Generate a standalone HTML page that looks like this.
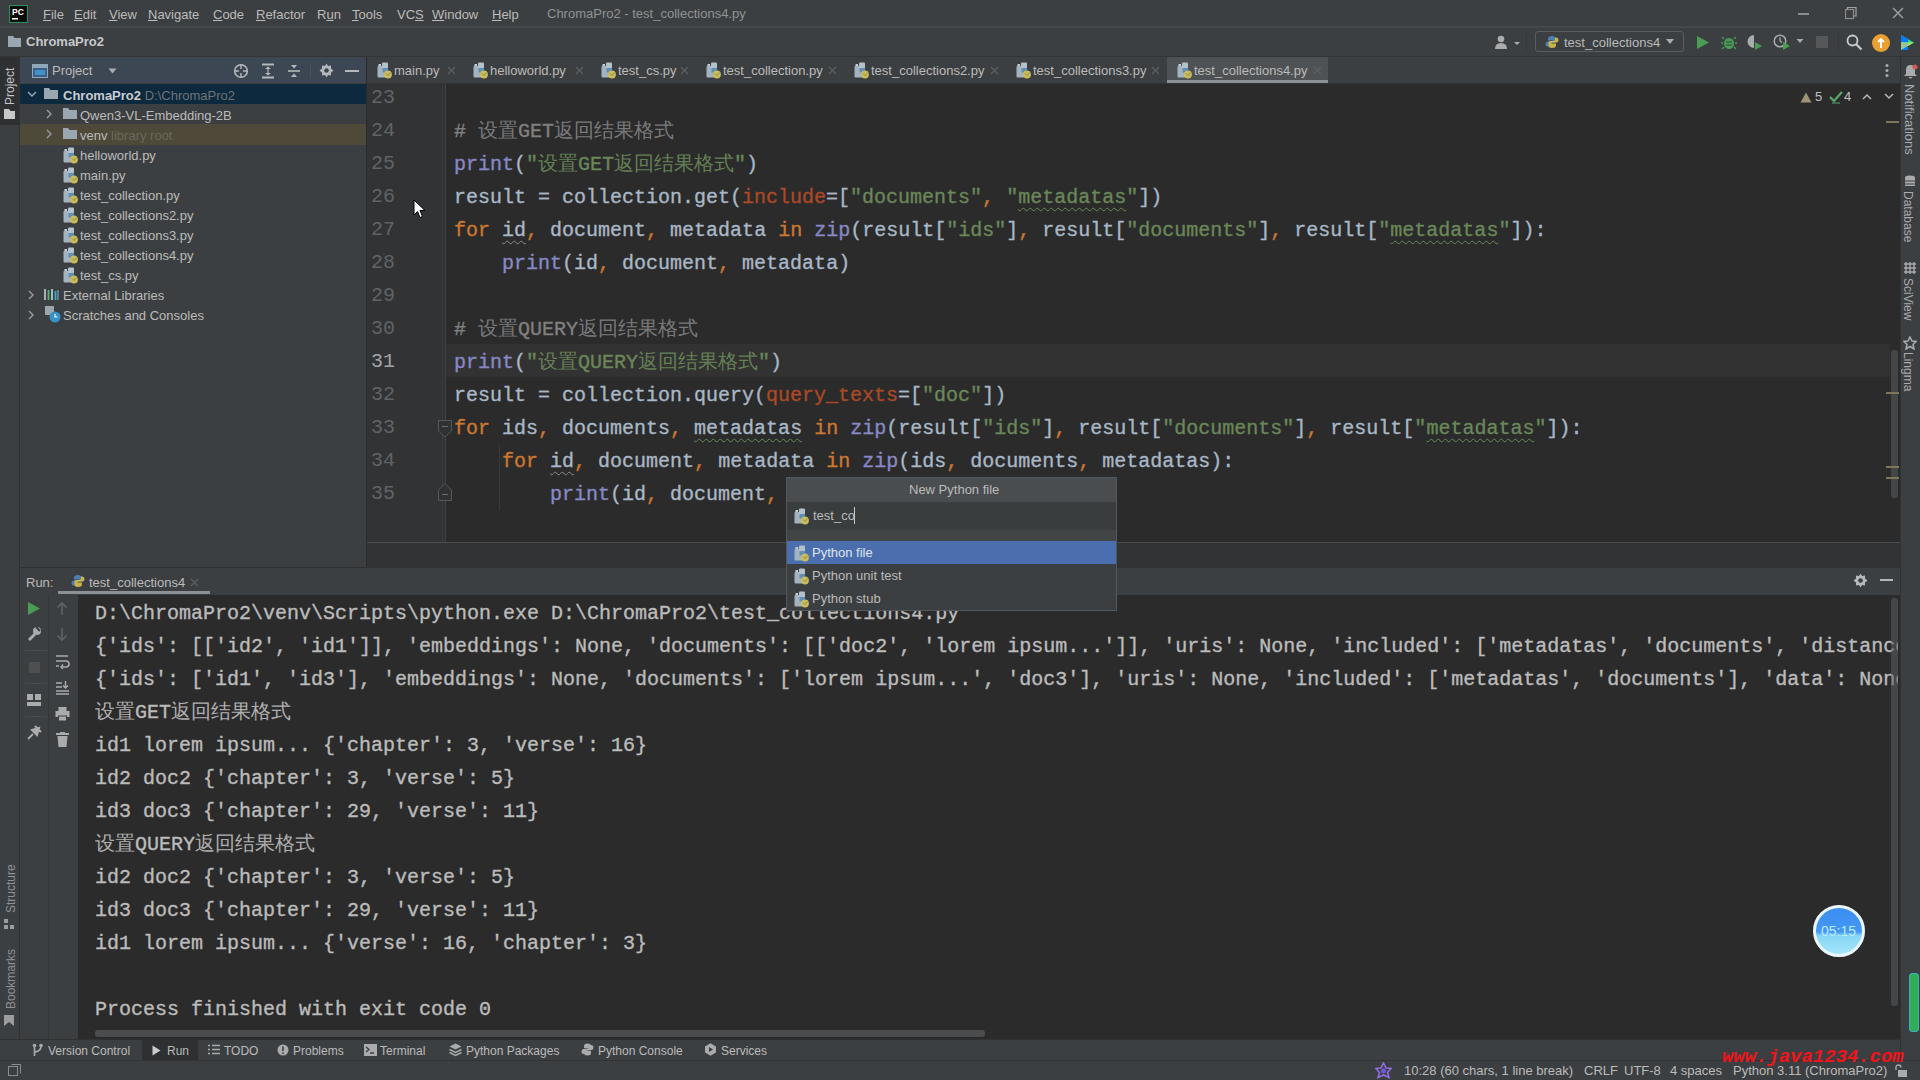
<!DOCTYPE html>
<html><head><meta charset="utf-8">
<style>
*{margin:0;padding:0;box-sizing:border-box}
html,body{width:1920px;height:1080px;overflow:hidden;background:#3c3f41;font-family:"Liberation Sans",sans-serif;color:#bbbbbb}
.a{position:absolute}
.ui{font-size:13px;white-space:nowrap;line-height:16px}
.mono{font-family:"Liberation Mono",monospace;font-size:20px;white-space:pre;line-height:33px;-webkit-text-stroke:0.35px currentColor}
.kw{color:#cc7832}.st{color:#6a8759}.cm{color:#808080}.bi{color:#8888c6}.pm{color:#aa4926}.tx{color:#a9b7c6}
.u{text-decoration:underline;text-underline-offset:1px}
.cj{-webkit-text-stroke:0;opacity:.92;display:inline-block;vertical-align:top;height:33px;overflow:hidden;white-space:nowrap}
.wv{text-decoration:underline wavy #6a8759;text-underline-offset:4px;text-decoration-thickness:1px}
.wvg{text-decoration:underline wavy #8a8a8a;text-underline-offset:4px;text-decoration-thickness:1px}
</style></head>
<body>
<div class="a" style="left:0px;top:0px;width:1920px;height:26px;background:#3c3f41;"></div>
<div class="a" style="left:0px;top:26px;width:1920px;height:2px;background:#45484a;"></div>
<div class="a" style="left:0px;top:28px;width:1920px;height:28px;background:#3c3f41;"></div>
<div class="a" style="left:0px;top:56px;width:1920px;height:1px;background:#323435;"></div>
<div class="a" style="left:0px;top:57px;width:20px;height:1003px;background:#3c3f41;"></div>
<div class="a" style="left:19px;top:57px;width:1px;height:1003px;background:#323232;"></div>
<div class="a" style="left:0px;top:57px;width:19px;height:68px;background:#2e3031;"></div>
<div class="a" style="left:20px;top:57px;width:346px;height:26px;background:#3d4753;"></div>
<div class="a" style="left:20px;top:83px;width:346px;height:484px;background:#3c3f41;"></div>
<div class="a" style="left:20px;top:84px;width:346px;height:20px;background:#0d293e;"></div>
<div class="a" style="left:20px;top:124px;width:346px;height:21px;background:#4e4939;"></div>
<div class="a" style="left:366px;top:57px;width:1px;height:510px;background:#2b2b2b;"></div>
<div class="a" style="left:367px;top:57px;width:1533px;height:26px;background:#3c3f41;"></div>
<div class="a" style="left:367px;top:83px;width:1533px;height:1px;background:#323232;"></div>
<div class="a" style="left:367px;top:84px;width:1533px;height:458px;background:#2b2b2b;"></div>
<div class="a" style="left:367px;top:84px;width:78px;height:458px;background:#313335;"></div>
<div class="a" style="left:445px;top:344px;width:1445px;height:33px;background:#323232;"></div>
<div class="a" style="left:367px;top:542px;width:1533px;height:1px;background:#4a4c4e;"></div>
<div class="a" style="left:367px;top:543px;width:1533px;height:24px;background:#313335;"></div>
<div class="a" style="left:20px;top:567px;width:1880px;height:1px;background:#323232;"></div>
<div class="a" style="left:20px;top:568px;width:1880px;height:27px;background:#3c3f41;"></div>
<div class="a" style="left:78px;top:595px;width:1822px;height:444px;background:#2b2b2b;"></div>
<div class="a" style="left:48px;top:595px;width:1px;height:445px;background:#353739;"></div>
<div class="a" style="left:0px;top:1039px;width:1920px;height:1px;background:#323232;"></div>
<div class="a" style="left:0px;top:1040px;width:1920px;height:20px;background:#3c3f41;"></div>
<div class="a" style="left:0px;top:1060px;width:1920px;height:1px;background:#323232;"></div>
<div class="a" style="left:0px;top:1061px;width:1920px;height:19px;background:#3c3f41;"></div>
<div class="a" style="left:1900px;top:57px;width:20px;height:1003px;background:#3c3f41;"></div>
<div class="a" style="left:1900px;top:57px;width:1px;height:1003px;background:#323232;"></div>
<svg class="a" style="left:9px;top:5px;" width="19" height="18" viewBox="0 0 19 18"><rect x="0.5" y="0.5" width="18" height="17" fill="#0b0b0b" stroke="#2f8a5c" stroke-width="1.2"/><text x="3" y="10" font-family="Liberation Sans" font-weight="bold" font-size="8.5" fill="#fff">PC</text><rect x="3" y="13" width="6" height="1.5" fill="#fff"/></svg>
<div class="a ui" style="left:43px;top:7px;color:#bbbbbb;font-size:13px;"><span class="u">F</span>ile</div>
<div class="a ui" style="left:74px;top:7px;color:#bbbbbb;font-size:13px;"><span class="u">E</span>dit</div>
<div class="a ui" style="left:109px;top:7px;color:#bbbbbb;font-size:13px;"><span class="u">V</span>iew</div>
<div class="a ui" style="left:148px;top:7px;color:#bbbbbb;font-size:13px;"><span class="u">N</span>avigate</div>
<div class="a ui" style="left:213px;top:7px;color:#bbbbbb;font-size:13px;"><span class="u">C</span>ode</div>
<div class="a ui" style="left:256px;top:7px;color:#bbbbbb;font-size:13px;"><span class="u">R</span>efactor</div>
<div class="a ui" style="left:317px;top:7px;color:#bbbbbb;font-size:13px;">R<span class="u">u</span>n</div>
<div class="a ui" style="left:352px;top:7px;color:#bbbbbb;font-size:13px;"><span class="u">T</span>ools</div>
<div class="a ui" style="left:397px;top:7px;color:#bbbbbb;font-size:13px;">VC<span class="u">S</span></div>
<div class="a ui" style="left:432px;top:7px;color:#bbbbbb;font-size:13px;"><span class="u">W</span>indow</div>
<div class="a ui" style="left:492px;top:7px;color:#bbbbbb;font-size:13px;"><span class="u">H</span>elp</div>
<div class="a ui" style="left:547px;top:6px;color:#8f9294;font-size:13px;">ChromaPro2 - test_collections4.py</div>
<div class="a" style="left:1798px;top:13px;width:11px;height:2px;background:#8a8c8e;"></div>
<svg class="a" style="left:1845px;top:7px;" width="12" height="13" viewBox="0 0 12 13"><rect x="0.5" y="2.5" width="8" height="9" fill="none" stroke="#8a8c8e" stroke-width="1.2"/><path d="M2.5 2.5 V0.5 H11 V9 H8.5" fill="none" stroke="#a0a2a4" stroke-width="1.2"/></svg>
<svg class="a" style="left:1892px;top:7px;" width="12" height="12" viewBox="0 0 12 12"><path d="M1 1 L11 11 M11 1 L1 11" stroke="#9a9c9e" stroke-width="1.5"/></svg>
<svg class="a" style="left:8px;top:36px;" width="13" height="11" viewBox="0 0 13 11"><path d="M0 0 H5 L6.5 2 H13 V11 H0 Z" fill="#9aa7b0"/></svg>
<div class="a ui" style="left:26px;top:34px;color:#c8c8c8;font-size:13px;font-weight:bold">ChromaPro2</div>
<svg class="a" style="left:1494px;top:35px;" width="26" height="16" viewBox="0 0 26 16"><circle cx="7" cy="4" r="3.3" fill="#a9abad"/><path d="M1 14 Q1 8 7 8 Q13 8 13 14Z" fill="#a9abad"/><path d="M20 7 h6 l-3 3z" fill="#a9abad"/></svg>
<div class="a" style="left:1526px;top:33px;width:1px;height:18px;background:#353738;"></div>
<div class="a" style="left:1535px;top:31px;width:149px;height:21px;border:1px solid #5b5d5f;border-radius:3px"></div>
<svg class="a" style="left:1545px;top:35px;" width="14" height="14" viewBox="0 0 14 14"><g transform="scale(1.0)"><path d="M7 1 Q3 1 3 3.5 V5.5 H7.5 V6.5 H2.5 Q0.5 6.5 0.5 9 Q0.5 11.5 2.5 11.5 H4 V9.5 Q4 8 5.5 8 H9 Q10.5 8 10.5 6.5 V3.5 Q10.5 1 7 1Z" fill="#4d7fae"/><path d="M7 13 Q11 13 11 10.5 V8.5 H6.5 V7.5 H11.5 Q13.5 7.5 13.5 5 Q13.5 2.5 11.5 2.5 H10 V4.5 Q10 6 8.5 6 H5 Q3.5 6 3.5 7.5 V10.5 Q3.5 13 7 13Z" fill="#d9bf4a" opacity="0.9"/></g></svg>
<div class="a ui" style="left:1564px;top:35px;color:#bbbbbb;font-size:13px;">test_collections4</div>
<svg class="a" style="left:1665px;top:38px;" width="10" height="7" viewBox="0 0 10 7"><path d="M1 1 h8 l-4 5z" fill="#a9abad"/></svg>
<svg class="a" style="left:1696px;top:35px;" width="14" height="15" viewBox="0 0 14 15"><path d="M1 1 L13 7.5 L1 14Z" fill="#499c54"/></svg>
<svg class="a" style="left:1721px;top:34px;" width="16" height="16" viewBox="0 0 16 16"><ellipse cx="8" cy="9.5" rx="5" ry="5.5" fill="#499c54"/><path d="M3 5 L1 3 M13 5 L15 3 M2 9 H0 M14 9 H16 M3 13 L1 15 M13 13 L15 15" stroke="#499c54" stroke-width="1.3"/><path d="M5 8 h6 M5 11 h6" stroke="#3c3f41" stroke-width="1.2"/></svg>
<svg class="a" style="left:1746px;top:34px;" width="18" height="17" viewBox="0 0 18 17"><path d="M8 1 A6.5 6.5 0 1 0 8 14 Z" fill="#a9abad"/><path d="M9 8 L16 12 L9 16Z" fill="#499c54"/></svg>
<svg class="a" style="left:1773px;top:34px;" width="18" height="17" viewBox="0 0 18 17"><circle cx="7" cy="7" r="5.8" fill="none" stroke="#a9abad" stroke-width="1.5"/><path d="M7 3.5 V7 L9 8.5" stroke="#a9abad" stroke-width="1.3" fill="none"/><path d="M10 8 L17 12 L10 16Z" fill="#499c54"/></svg>
<svg class="a" style="left:1796px;top:38px;" width="8" height="6" viewBox="0 0 8 6"><path d="M0.5 1 h7 l-3.5 4z" fill="#a9abad"/></svg>
<div class="a" style="left:1816px;top:36px;width:12px;height:12px;background:#555759;"></div>
<div class="a" style="left:1838px;top:33px;width:1px;height:18px;background:#353738;"></div>
<svg class="a" style="left:1846px;top:34px;" width="17" height="17" viewBox="0 0 17 17"><circle cx="6.5" cy="6.5" r="5" fill="none" stroke="#c8cacc" stroke-width="1.8"/><path d="M10 10 L15.5 15.5" stroke="#c8cacc" stroke-width="2.2"/></svg>
<svg class="a" style="left:1871px;top:33px;" width="20" height="20" viewBox="0 0 20 20"><circle cx="10" cy="10" r="9" fill="#e9a030"/><path d="M10 15 V6 M7 9 L10 6 L13 9" stroke="#fff" stroke-width="1.8" fill="none"/></svg>
<svg class="a" style="left:1899px;top:34px;" width="17" height="17" viewBox="0 0 17 17"><path d="M2 1 L15 8.5 L2 16Z" fill="#21d789"/><path d="M2 1 L9 5 L9 16 L2 16Z" fill="#087cfa"/><path d="M2 8 L15 8.5 L2 16Z" fill="#fcf84a" opacity="0.6"/></svg>
<div class="a ui" style="left:2px;top:105px;color:#c5c7c9;font-size:12px;transform-origin:0 0;transform:rotate(-90deg)">Project</div>
<svg class="a" style="left:4px;top:109px;" width="11" height="10" viewBox="0 0 11 10"><path d="M0 0 H5 L6.5 2 H11 V10 H0 Z" fill="#c5c7c9"/></svg>
<div class="a ui" style="left:3px;top:913px;color:#8f9193;font-size:12px;transform-origin:0 0;transform:rotate(-90deg)">Structure</div>
<svg class="a" style="left:4px;top:919px;" width="11" height="11" viewBox="0 0 11 11"><rect x="0" y="0" width="4" height="4" fill="#9a9c9e"/><rect x="0" y="6" width="4" height="4" fill="#9a9c9e"/><rect x="6" y="6" width="4" height="4" fill="#9a9c9e"/></svg>
<div class="a ui" style="left:3px;top:1009px;color:#8f9193;font-size:12px;transform-origin:0 0;transform:rotate(-90deg)">Bookmarks</div>
<svg class="a" style="left:4px;top:1015px;" width="11" height="12" viewBox="0 0 11 12"><path d="M0 0 H10 V11 L5 7 L0 11Z" fill="#9a9c9e"/></svg>
<svg class="a" style="left:32px;top:64px;" width="16" height="14" viewBox="0 0 16 14"><rect x="0.5" y="0.5" width="15" height="13" fill="#3d6185" stroke="#8fa6bb"/><rect x="1" y="1" width="14" height="3" fill="#8fa6bb"/><rect x="3" y="6" width="10" height="5" fill="#40a0d8" opacity="0.8"/></svg>
<div class="a ui" style="left:52px;top:63px;color:#bbbbbb;font-size:13px;">Project</div>
<svg class="a" style="left:108px;top:68px;" width="9" height="6" viewBox="0 0 9 6"><path d="M0.5 0.5 h8 l-4 5z" fill="#a9abad"/></svg>
<svg class="a" style="left:233px;top:63px;" width="16" height="16" viewBox="0 0 16 16"><circle cx="8" cy="8" r="6.3" fill="none" stroke="#b5b8bb" stroke-width="1.6"/><path d="M8 1 V6 M8 10 V15 M1 8 H6 M10 8 H15" stroke="#b5b8bb" stroke-width="1.4"/></svg>
<svg class="a" style="left:261px;top:63px;" width="14" height="16" viewBox="0 0 14 16"><path d="M1 1.5 H13 M1 14.5 H13" stroke="#b5b8bb" stroke-width="1.8"/><path d="M4 6 L7 3.5 L10 6 M4 10 L7 12.5 L10 10" fill="#b5b8bb"/><path d="M7 4 V12" stroke="#b5b8bb" stroke-width="1.2"/></svg>
<svg class="a" style="left:287px;top:63px;" width="14" height="16" viewBox="0 0 14 16"><path d="M1 8 H13" stroke="#b5b8bb" stroke-width="1.6"/><path d="M4 2 L7 5.5 L10 2Z M4 14 L7 10.5 L10 14Z" fill="#b5b8bb"/></svg>
<div class="a" style="left:310px;top:63px;width:1px;height:15px;background:#46525e;"></div>
<svg class="a" style="left:319px;top:63px;" width="15" height="15" viewBox="0 0 15 15"><path d="M7.5 0.5 L9 3 L12 2.5 L12 5.5 L14.5 7.5 L12 9.5 L12 12.5 L9 12 L7.5 14.5 L6 12 L3 12.5 L3 9.5 L0.5 7.5 L3 5.5 L3 2.5 L6 3Z" fill="#b5b8bb"/><circle cx="7.5" cy="7.5" r="2.3" fill="#3d4753"/></svg>
<div class="a" style="left:345px;top:70px;width:14px;height:2px;background:#b5b8bb;"></div>
<svg class="a" style="left:27px;top:90px;" width="10" height="8" viewBox="0 0 10 8"><path d="M1 2 L5 6 L9 2" stroke="#9aa9b5" stroke-width="1.4" fill="none"/></svg>
<svg class="a" style="left:44px;top:88px;" width="14" height="11" viewBox="0 0 14 11"><path d="M0 0 H5 L6.5 2 H14 V11 H0 Z" fill="#9aa7b0"/></svg>
<div class="a ui" style="left:63px;top:88px;color:#bbbbbb;font-size:13px;"><b style="color:#c9ccd0">ChromaPro2</b> <span style="color:#6f7376">D:\ChromaPro2</span></div>
<svg class="a" style="left:45px;top:109px;" width="8" height="10" viewBox="0 0 8 10"><path d="M2 1 L6 5 L2 9" stroke="#9a9da0" stroke-width="1.4" fill="none"/></svg>
<svg class="a" style="left:63px;top:108px;" width="14" height="11" viewBox="0 0 14 11"><path d="M0 0 H5 L6.5 2 H14 V11 H0 Z" fill="#9aa7b0"/></svg>
<div class="a ui" style="left:80px;top:108px;color:#bbbbbb;font-size:13px;">Qwen3-VL-Embedding-2B</div>
<svg class="a" style="left:45px;top:129px;" width="8" height="10" viewBox="0 0 8 10"><path d="M2 1 L6 5 L2 9" stroke="#9a9da0" stroke-width="1.4" fill="none"/></svg>
<svg class="a" style="left:63px;top:128px;" width="14" height="11" viewBox="0 0 14 11"><path d="M0 0 H5 L6.5 2 H14 V11 H0 Z" fill="#9aa7b0"/></svg>
<div class="a ui" style="left:80px;top:128px;color:#bbbbbb;font-size:13px;">venv <span style="color:#6a685c">library root</span></div>
<svg class="a" style="left:63px;top:147px;" width="16" height="17" viewBox="0 0 16 17"><rect x="0.5" y="4" width="8" height="11.5" rx="1" fill="#a3b3bf"/><rect x="5" y="0.5" width="6" height="6" rx="1" fill="#b4c0ca"/><rect x="1.5" y="2" width="2.5" height="2" fill="#c6ced6"/><rect x="5.5" y="6" width="5.5" height="4.5" fill="#5f8fb6"/><circle cx="11" cy="12.5" r="3.9" fill="#c9bc5c"/><path d="M9 11.5 L11 13.5 L13.5 10.5" stroke="#8a8a3a" stroke-width="0.9" fill="none"/></svg>
<div class="a ui" style="left:80px;top:148px;color:#bbbbbb;font-size:13px;">helloworld.py</div>
<svg class="a" style="left:63px;top:167px;" width="16" height="17" viewBox="0 0 16 17"><rect x="0.5" y="4" width="8" height="11.5" rx="1" fill="#a3b3bf"/><rect x="5" y="0.5" width="6" height="6" rx="1" fill="#b4c0ca"/><rect x="1.5" y="2" width="2.5" height="2" fill="#c6ced6"/><rect x="5.5" y="6" width="5.5" height="4.5" fill="#5f8fb6"/><circle cx="11" cy="12.5" r="3.9" fill="#c9bc5c"/><path d="M9 11.5 L11 13.5 L13.5 10.5" stroke="#8a8a3a" stroke-width="0.9" fill="none"/></svg>
<div class="a ui" style="left:80px;top:168px;color:#bbbbbb;font-size:13px;">main.py</div>
<svg class="a" style="left:63px;top:187px;" width="16" height="17" viewBox="0 0 16 17"><rect x="0.5" y="4" width="8" height="11.5" rx="1" fill="#a3b3bf"/><rect x="5" y="0.5" width="6" height="6" rx="1" fill="#b4c0ca"/><rect x="1.5" y="2" width="2.5" height="2" fill="#c6ced6"/><rect x="5.5" y="6" width="5.5" height="4.5" fill="#5f8fb6"/><circle cx="11" cy="12.5" r="3.9" fill="#c9bc5c"/><path d="M9 11.5 L11 13.5 L13.5 10.5" stroke="#8a8a3a" stroke-width="0.9" fill="none"/></svg>
<div class="a ui" style="left:80px;top:188px;color:#bbbbbb;font-size:13px;">test_collection.py</div>
<svg class="a" style="left:63px;top:207px;" width="16" height="17" viewBox="0 0 16 17"><rect x="0.5" y="4" width="8" height="11.5" rx="1" fill="#a3b3bf"/><rect x="5" y="0.5" width="6" height="6" rx="1" fill="#b4c0ca"/><rect x="1.5" y="2" width="2.5" height="2" fill="#c6ced6"/><rect x="5.5" y="6" width="5.5" height="4.5" fill="#5f8fb6"/><circle cx="11" cy="12.5" r="3.9" fill="#c9bc5c"/><path d="M9 11.5 L11 13.5 L13.5 10.5" stroke="#8a8a3a" stroke-width="0.9" fill="none"/></svg>
<div class="a ui" style="left:80px;top:208px;color:#bbbbbb;font-size:13px;">test_collections2.py</div>
<svg class="a" style="left:63px;top:227px;" width="16" height="17" viewBox="0 0 16 17"><rect x="0.5" y="4" width="8" height="11.5" rx="1" fill="#a3b3bf"/><rect x="5" y="0.5" width="6" height="6" rx="1" fill="#b4c0ca"/><rect x="1.5" y="2" width="2.5" height="2" fill="#c6ced6"/><rect x="5.5" y="6" width="5.5" height="4.5" fill="#5f8fb6"/><circle cx="11" cy="12.5" r="3.9" fill="#c9bc5c"/><path d="M9 11.5 L11 13.5 L13.5 10.5" stroke="#8a8a3a" stroke-width="0.9" fill="none"/></svg>
<div class="a ui" style="left:80px;top:228px;color:#bbbbbb;font-size:13px;">test_collections3.py</div>
<svg class="a" style="left:63px;top:247px;" width="16" height="17" viewBox="0 0 16 17"><rect x="0.5" y="4" width="8" height="11.5" rx="1" fill="#a3b3bf"/><rect x="5" y="0.5" width="6" height="6" rx="1" fill="#b4c0ca"/><rect x="1.5" y="2" width="2.5" height="2" fill="#c6ced6"/><rect x="5.5" y="6" width="5.5" height="4.5" fill="#5f8fb6"/><circle cx="11" cy="12.5" r="3.9" fill="#c9bc5c"/><path d="M9 11.5 L11 13.5 L13.5 10.5" stroke="#8a8a3a" stroke-width="0.9" fill="none"/></svg>
<div class="a ui" style="left:80px;top:248px;color:#bbbbbb;font-size:13px;">test_collections4.py</div>
<svg class="a" style="left:63px;top:267px;" width="16" height="17" viewBox="0 0 16 17"><rect x="0.5" y="4" width="8" height="11.5" rx="1" fill="#a3b3bf"/><rect x="5" y="0.5" width="6" height="6" rx="1" fill="#b4c0ca"/><rect x="1.5" y="2" width="2.5" height="2" fill="#c6ced6"/><rect x="5.5" y="6" width="5.5" height="4.5" fill="#5f8fb6"/><circle cx="11" cy="12.5" r="3.9" fill="#c9bc5c"/><path d="M9 11.5 L11 13.5 L13.5 10.5" stroke="#8a8a3a" stroke-width="0.9" fill="none"/></svg>
<div class="a ui" style="left:80px;top:268px;color:#bbbbbb;font-size:13px;">test_cs.py</div>
<svg class="a" style="left:27px;top:290px;" width="8" height="10" viewBox="0 0 8 10"><path d="M2 1 L6 5 L2 9" stroke="#9a9da0" stroke-width="1.4" fill="none"/></svg>
<svg class="a" style="left:44px;top:288px;" width="15" height="13" viewBox="0 0 15 13"><path d="M1 1 V12" stroke="#b8bcc0" stroke-width="1.8"/><path d="M4.5 2 V12" stroke="#62b06e" stroke-width="1.8"/><path d="M8 1 V12" stroke="#9fd0d8" stroke-width="1.8"/><path d="M11.5 3 V12" stroke="#40a8c8" stroke-width="1.8"/><path d="M14 2 V12" stroke="#7aa0c0" stroke-width="1.2"/></svg>
<div class="a ui" style="left:63px;top:288px;color:#bbbbbb;font-size:13px;">External Libraries</div>
<svg class="a" style="left:27px;top:310px;" width="8" height="10" viewBox="0 0 8 10"><path d="M2 1 L6 5 L2 9" stroke="#9a9da0" stroke-width="1.4" fill="none"/></svg>
<svg class="a" style="left:44px;top:305px;" width="18" height="18" viewBox="0 0 18 18"><rect x="1" y="1" width="9" height="9" fill="#9aa7b0"/><circle cx="11" cy="12" r="5.5" fill="#3592c4"/><path d="M11 9 V12 H13.5" stroke="#fff" stroke-width="1.1" fill="none"/></svg>
<div class="a ui" style="left:63px;top:308px;color:#bbbbbb;font-size:13px;">Scratches and Consoles</div>
<div class="a" style="left:1167px;top:57px;width:161px;height:26px;background:#4e5254;"></div>
<div class="a" style="left:1167px;top:80px;width:161px;height:3px;background:#8d9194;"></div>
<svg class="a" style="left:377px;top:62px;" width="16" height="17" viewBox="0 0 16 17"><rect x="0.5" y="4" width="8" height="11.5" rx="1" fill="#a3b3bf"/><rect x="5" y="0.5" width="6" height="6" rx="1" fill="#b4c0ca"/><rect x="1.5" y="2" width="2.5" height="2" fill="#c6ced6"/><rect x="5.5" y="6" width="5.5" height="4.5" fill="#5f8fb6"/><circle cx="11" cy="12.5" r="3.9" fill="#c9bc5c"/><path d="M9 11.5 L11 13.5 L13.5 10.5" stroke="#8a8a3a" stroke-width="0.9" fill="none"/></svg>
<div class="a ui" style="left:394px;top:63px;color:#bbbbbb;font-size:13px;">main.py</div>
<svg class="a" style="left:447px;top:66px;" width="9" height="9" viewBox="0 0 9 9"><path d="M1 1 L8 8 M8 1 L1 8" stroke="#5e6163" stroke-width="1.1"/></svg>
<svg class="a" style="left:473px;top:62px;" width="16" height="17" viewBox="0 0 16 17"><rect x="0.5" y="4" width="8" height="11.5" rx="1" fill="#a3b3bf"/><rect x="5" y="0.5" width="6" height="6" rx="1" fill="#b4c0ca"/><rect x="1.5" y="2" width="2.5" height="2" fill="#c6ced6"/><rect x="5.5" y="6" width="5.5" height="4.5" fill="#5f8fb6"/><circle cx="11" cy="12.5" r="3.9" fill="#c9bc5c"/><path d="M9 11.5 L11 13.5 L13.5 10.5" stroke="#8a8a3a" stroke-width="0.9" fill="none"/></svg>
<div class="a ui" style="left:490px;top:63px;color:#bbbbbb;font-size:13px;">helloworld.py</div>
<svg class="a" style="left:575px;top:66px;" width="9" height="9" viewBox="0 0 9 9"><path d="M1 1 L8 8 M8 1 L1 8" stroke="#5e6163" stroke-width="1.1"/></svg>
<svg class="a" style="left:601px;top:62px;" width="16" height="17" viewBox="0 0 16 17"><rect x="0.5" y="4" width="8" height="11.5" rx="1" fill="#a3b3bf"/><rect x="5" y="0.5" width="6" height="6" rx="1" fill="#b4c0ca"/><rect x="1.5" y="2" width="2.5" height="2" fill="#c6ced6"/><rect x="5.5" y="6" width="5.5" height="4.5" fill="#5f8fb6"/><circle cx="11" cy="12.5" r="3.9" fill="#c9bc5c"/><path d="M9 11.5 L11 13.5 L13.5 10.5" stroke="#8a8a3a" stroke-width="0.9" fill="none"/></svg>
<div class="a ui" style="left:618px;top:63px;color:#bbbbbb;font-size:13px;">test_cs.py</div>
<svg class="a" style="left:680px;top:66px;" width="9" height="9" viewBox="0 0 9 9"><path d="M1 1 L8 8 M8 1 L1 8" stroke="#5e6163" stroke-width="1.1"/></svg>
<svg class="a" style="left:706px;top:62px;" width="16" height="17" viewBox="0 0 16 17"><rect x="0.5" y="4" width="8" height="11.5" rx="1" fill="#a3b3bf"/><rect x="5" y="0.5" width="6" height="6" rx="1" fill="#b4c0ca"/><rect x="1.5" y="2" width="2.5" height="2" fill="#c6ced6"/><rect x="5.5" y="6" width="5.5" height="4.5" fill="#5f8fb6"/><circle cx="11" cy="12.5" r="3.9" fill="#c9bc5c"/><path d="M9 11.5 L11 13.5 L13.5 10.5" stroke="#8a8a3a" stroke-width="0.9" fill="none"/></svg>
<div class="a ui" style="left:723px;top:63px;color:#bbbbbb;font-size:13px;">test_collection.py</div>
<svg class="a" style="left:828px;top:66px;" width="9" height="9" viewBox="0 0 9 9"><path d="M1 1 L8 8 M8 1 L1 8" stroke="#5e6163" stroke-width="1.1"/></svg>
<svg class="a" style="left:854px;top:62px;" width="16" height="17" viewBox="0 0 16 17"><rect x="0.5" y="4" width="8" height="11.5" rx="1" fill="#a3b3bf"/><rect x="5" y="0.5" width="6" height="6" rx="1" fill="#b4c0ca"/><rect x="1.5" y="2" width="2.5" height="2" fill="#c6ced6"/><rect x="5.5" y="6" width="5.5" height="4.5" fill="#5f8fb6"/><circle cx="11" cy="12.5" r="3.9" fill="#c9bc5c"/><path d="M9 11.5 L11 13.5 L13.5 10.5" stroke="#8a8a3a" stroke-width="0.9" fill="none"/></svg>
<div class="a ui" style="left:871px;top:63px;color:#bbbbbb;font-size:13px;">test_collections2.py</div>
<svg class="a" style="left:990px;top:66px;" width="9" height="9" viewBox="0 0 9 9"><path d="M1 1 L8 8 M8 1 L1 8" stroke="#5e6163" stroke-width="1.1"/></svg>
<svg class="a" style="left:1016px;top:62px;" width="16" height="17" viewBox="0 0 16 17"><rect x="0.5" y="4" width="8" height="11.5" rx="1" fill="#a3b3bf"/><rect x="5" y="0.5" width="6" height="6" rx="1" fill="#b4c0ca"/><rect x="1.5" y="2" width="2.5" height="2" fill="#c6ced6"/><rect x="5.5" y="6" width="5.5" height="4.5" fill="#5f8fb6"/><circle cx="11" cy="12.5" r="3.9" fill="#c9bc5c"/><path d="M9 11.5 L11 13.5 L13.5 10.5" stroke="#8a8a3a" stroke-width="0.9" fill="none"/></svg>
<div class="a ui" style="left:1033px;top:63px;color:#bbbbbb;font-size:13px;">test_collections3.py</div>
<svg class="a" style="left:1151px;top:66px;" width="9" height="9" viewBox="0 0 9 9"><path d="M1 1 L8 8 M8 1 L1 8" stroke="#5e6163" stroke-width="1.1"/></svg>
<svg class="a" style="left:1177px;top:62px;" width="16" height="17" viewBox="0 0 16 17"><rect x="0.5" y="4" width="8" height="11.5" rx="1" fill="#a3b3bf"/><rect x="5" y="0.5" width="6" height="6" rx="1" fill="#b4c0ca"/><rect x="1.5" y="2" width="2.5" height="2" fill="#c6ced6"/><rect x="5.5" y="6" width="5.5" height="4.5" fill="#5f8fb6"/><circle cx="11" cy="12.5" r="3.9" fill="#c9bc5c"/><path d="M9 11.5 L11 13.5 L13.5 10.5" stroke="#8a8a3a" stroke-width="0.9" fill="none"/></svg>
<div class="a ui" style="left:1194px;top:63px;color:#bbbbbb;font-size:13px;">test_collections4.py</div>
<svg class="a" style="left:1313px;top:66px;" width="9" height="9" viewBox="0 0 9 9"><path d="M1 1 L8 8 M8 1 L1 8" stroke="#5e6163" stroke-width="1.1"/></svg>
<svg class="a" style="left:1885px;top:63px;" width="4" height="15" viewBox="0 0 4 15"><circle cx="2" cy="2.5" r="1.5" fill="#a9abad"/><circle cx="2" cy="7.5" r="1.5" fill="#a9abad"/><circle cx="2" cy="12.5" r="1.5" fill="#a9abad"/></svg>
<div class="a mono tx" style="left:454px;top:82px">
<span class="cm"># <span class="cj" style="width:40px">设置</span>GET<span class="cj" style="width:120px">返回结果格式</span></span>
<span class="bi">print</span>(<span class="st">"<span class="cj" style="width:40px">设置</span>GET<span class="cj" style="width:120px">返回结果格式</span>"</span>)
result = collection.get(<span class="pm">include</span>=[<span class="st">"documents"</span><span class="kw">,</span> <span class="st">"<span class="wv">metadatas</span>"</span>])
<span class="kw">for</span> <span class="wvg">id</span><span class="kw">,</span> document<span class="kw">,</span> metadata <span class="kw">in</span> <span class="bi">zip</span>(result[<span class="st">"ids"</span>]<span class="kw">,</span> result[<span class="st">"documents"</span>]<span class="kw">,</span> result[<span class="st">"<span class="wv">metadatas</span>"</span>]):
    <span class="bi">print</span>(id<span class="kw">,</span> document<span class="kw">,</span> metadata)

<span class="cm"># <span class="cj" style="width:40px">设置</span>QUERY<span class="cj" style="width:120px">返回结果格式</span></span>
<span class="bi">print</span>(<span class="st">"<span class="cj" style="width:40px">设置</span>QUERY<span class="cj" style="width:120px">返回结果格式</span>"</span>)
result = collection.query(<span class="pm">query_texts</span>=[<span class="st">"doc"</span>])
<span class="kw">for</span> ids<span class="kw">,</span> documents<span class="kw">,</span> <span class="wv">metadatas</span> <span class="kw">in</span> <span class="bi">zip</span>(result[<span class="st">"ids"</span>]<span class="kw">,</span> result[<span class="st">"documents"</span>]<span class="kw">,</span> result[<span class="st">"<span class="wv">metadatas</span>"</span>]):
    <span class="kw">for</span> <span class="wvg">id</span><span class="kw">,</span> document<span class="kw">,</span> metadata <span class="kw">in</span> <span class="bi">zip</span>(ids<span class="kw">,</span> documents<span class="kw">,</span> metadatas):
        <span class="bi">print</span>(id<span class="kw">,</span> document<span class="kw">,</span> metadata)</div>
<div class="a mono" style="left:371px;top:81px;color:#606366;-webkit-text-stroke:0">23
24
25
26
27
28
29
30
<span style="color:#a4a3a3">31</span>
32
33
34
35</div>
<div class="a" style="left:442px;top:84px;width:1px;height:458px;background:#3a3c3e;"></div>
<div class="a" style="left:445px;top:84px;width:1px;height:458px;background:#3e4042;"></div>
<svg class="a" style="left:437px;top:419px;" width="16" height="20" viewBox="0 0 16 20"><path d="M1.5 1.5 H14.5 V12 L8 18 L1.5 12Z" fill="#2f3133" stroke="#55585a"/><path d="M5 7.5 H11" stroke="#6a6d70"/></svg>
<svg class="a" style="left:437px;top:482px;" width="16" height="20" viewBox="0 0 16 20"><path d="M1.5 18.5 H14.5 V8 L8 1.5 L1.5 8Z" fill="#2f3133" stroke="#55585a"/><path d="M5 12.5 H11" stroke="#6a6d70"/></svg>
<div class="a" style="left:499px;top:445px;width:1px;height:65px;background:#393939;"></div>
<svg class="a" style="left:1800px;top:92px;" width="12" height="11" viewBox="0 0 12 11"><path d="M6 0.5 L11.5 10.5 H0.5Z" fill="#9e9373"/></svg>
<div class="a ui" style="left:1815px;top:89px;color:#c0c2c4;font-size:13px;">5</div>
<svg class="a" style="left:1829px;top:90px;" width="14" height="14" viewBox="0 0 14 14"><path d="M1 7 L5 11 L13 2" stroke="#59a869" stroke-width="2.2" fill="none"/><path d="M3 13 H11" stroke="#59a869" stroke-width="1"/></svg>
<div class="a ui" style="left:1844px;top:89px;color:#c0c2c4;font-size:13px;">4</div>
<svg class="a" style="left:1862px;top:93px;" width="10" height="7" viewBox="0 0 10 7"><path d="M1 6 L5 2 L9 6" stroke="#b5b8bb" stroke-width="1.5" fill="none"/></svg>
<svg class="a" style="left:1884px;top:93px;" width="10" height="7" viewBox="0 0 10 7"><path d="M1 1 L5 5 L9 1" stroke="#b5b8bb" stroke-width="1.5" fill="none"/></svg>
<div class="a" style="left:1891px;top:350px;width:7px;height:148px;background:#434547;border-radius:3px"></div>
<div class="a" style="left:1886px;top:121px;width:13px;height:2px;background:#7d7658;"></div>
<div class="a" style="left:1886px;top:392px;width:13px;height:2px;background:#7d7658;"></div>
<div class="a" style="left:1886px;top:466px;width:13px;height:2px;background:#7d7658;"></div>
<div class="a" style="left:1886px;top:477px;width:13px;height:2px;background:#7d7658;"></div>
<div class="a ui" style="left:26px;top:575px;color:#bbbbbb;font-size:13px;">Run:</div>
<svg class="a" style="left:71px;top:574px;" width="14" height="14" viewBox="0 0 14 14"><g transform="scale(1.0)"><path d="M7 1 Q3 1 3 3.5 V5.5 H7.5 V6.5 H2.5 Q0.5 6.5 0.5 9 Q0.5 11.5 2.5 11.5 H4 V9.5 Q4 8 5.5 8 H9 Q10.5 8 10.5 6.5 V3.5 Q10.5 1 7 1Z" fill="#4d7fae"/><path d="M7 13 Q11 13 11 10.5 V8.5 H6.5 V7.5 H11.5 Q13.5 7.5 13.5 5 Q13.5 2.5 11.5 2.5 H10 V4.5 Q10 6 8.5 6 H5 Q3.5 6 3.5 7.5 V10.5 Q3.5 13 7 13Z" fill="#d9bf4a" opacity="0.9"/></g></svg>
<div class="a ui" style="left:89px;top:575px;color:#bbbbbb;font-size:13px;">test_collections4</div>
<svg class="a" style="left:190px;top:578px;" width="9" height="9" viewBox="0 0 9 9"><path d="M1 1 L8 8 M8 1 L1 8" stroke="#5e6163" stroke-width="1.1"/></svg>
<div class="a" style="left:58px;top:591px;width:152px;height:3px;background:#8d9194;"></div>
<svg class="a" style="left:1853px;top:573px;" width="15" height="15" viewBox="0 0 15 15"><path d="M7.5 0.5 L9 3 L12 2.5 L12 5.5 L14.5 7.5 L12 9.5 L12 12.5 L9 12 L7.5 14.5 L6 12 L3 12.5 L3 9.5 L0.5 7.5 L3 5.5 L3 2.5 L6 3Z" fill="#b5b8bb"/><circle cx="7.5" cy="7.5" r="2.3" fill="#3c3f41"/></svg>
<div class="a" style="left:1880px;top:579px;width:13px;height:2px;background:#b5b8bb;"></div>
<svg class="a" style="left:27px;top:601px;" width="14" height="15" viewBox="0 0 14 15"><path d="M1 1 L13 7.5 L1 14Z" fill="#499c54"/></svg>
<svg class="a" style="left:26px;top:626px;" width="16" height="16" viewBox="0 0 16 16"><path d="M3 14 L9 8" stroke="#a9abad" stroke-width="3"/><circle cx="11" cy="5" r="4" fill="#a9abad"/><path d="M10 1 L14 5" stroke="#3c3f41" stroke-width="2"/></svg>
<div class="a" style="left:25px;top:650px;width:22px;height:1px;background:#4a4d4f;"></div>
<div class="a" style="left:29px;top:662px;width:11px;height:11px;background:#4d4f51;"></div>
<div class="a" style="left:25px;top:683px;width:22px;height:1px;background:#4a4d4f;"></div>
<svg class="a" style="left:26px;top:693px;" width="16" height="14" viewBox="0 0 16 14"><rect x="1" y="1" width="6" height="6" fill="#a9abad"/><rect x="9" y="1" width="6" height="6" fill="#a9abad"/><rect x="1" y="9" width="14" height="4" fill="#a9abad"/></svg>
<div class="a" style="left:25px;top:716px;width:22px;height:1px;background:#4a4d4f;"></div>
<svg class="a" style="left:26px;top:725px;" width="16" height="16" viewBox="0 0 16 16"><path d="M2 14 L7 9" stroke="#a9abad" stroke-width="1.8"/><path d="M6 5 L11 10 L13 3Z M9 1 L15 7" fill="#a9abad" stroke="#a9abad" stroke-width="2"/></svg>
<svg class="a" style="left:56px;top:601px;" width="12" height="15" viewBox="0 0 12 15"><path d="M6 14 V2 M1.5 6.5 L6 2 L10.5 6.5" stroke="#5f6264" stroke-width="1.6" fill="none"/></svg>
<svg class="a" style="left:56px;top:627px;" width="12" height="15" viewBox="0 0 12 15"><path d="M6 1 V13 M1.5 8.5 L6 13 L10.5 8.5" stroke="#5f6264" stroke-width="1.6" fill="none"/></svg>
<svg class="a" style="left:55px;top:654px;" width="15" height="15" viewBox="0 0 15 15"><path d="M1 2 H13 M1 7 H11 Q14 7 14 10 Q14 13 11 13 H7 M1 12 H4" stroke="#a9abad" stroke-width="1.6" fill="none"/><path d="M8 10.5 L6 13 L8 15.5" stroke="#a9abad" stroke-width="1.4" fill="none"/></svg>
<svg class="a" style="left:55px;top:680px;" width="15" height="15" viewBox="0 0 15 15"><path d="M1 3 H7 M1 7 H7 M1 11 H14 M1 14 H14" stroke="#a9abad" stroke-width="1.6"/><path d="M10.5 1 V8 M8 5.5 L10.5 8 L13 5.5" stroke="#a9abad" stroke-width="1.4" fill="none"/></svg>
<svg class="a" style="left:55px;top:706px;" width="15" height="16" viewBox="0 0 15 16"><rect x="3.5" y="1" width="8" height="4" fill="#a9abad"/><rect x="0.5" y="5" width="14" height="6" fill="#a9abad"/><rect x="3.5" y="10" width="8" height="5" fill="#a9abad" stroke="#3c3f41" stroke-width="1"/></svg>
<svg class="a" style="left:56px;top:732px;" width="13" height="15" viewBox="0 0 13 15"><rect x="0" y="1" width="13" height="2" fill="#a9abad"/><rect x="4" y="0" width="5" height="2" fill="#a9abad"/><path d="M1.5 4 H11.5 L10.5 15 H2.5Z" fill="#a9abad"/></svg>
<div class="a" style="left:78px;top:595px;width:1820px;height:440px;overflow:hidden"><div class="a mono" style="left:17px;top:2px;color:#bbbbbb">D:\ChromaPro2\venv\Scripts\python.exe D:\ChromaPro2\test_collections4.py
{'ids': [['id2', 'id1']], 'embeddings': None, 'documents': [['doc2', 'lorem ipsum...']], 'uris': None, 'included': ['metadatas', 'documents', 'distances'], 'data': None}
{'ids': ['id1', 'id3'], 'embeddings': None, 'documents': ['lorem ipsum...', 'doc3'], 'uris': None, 'included': ['metadatas', 'documents'], 'data': None, 'metadatas': None}
<span class="cj" style="width:40px">设置</span>GET<span class="cj" style="width:120px">返回结果格式</span>
id1 lorem ipsum... {'chapter': 3, 'verse': 16}
id2 doc2 {'chapter': 3, 'verse': 5}
id3 doc3 {'chapter': 29, 'verse': 11}
<span class="cj" style="width:40px">设置</span>QUERY<span class="cj" style="width:120px">返回结果格式</span>
id2 doc2 {'chapter': 3, 'verse': 5}
id3 doc3 {'chapter': 29, 'verse': 11}
id1 lorem ipsum... {'verse': 16, 'chapter': 3}

Process finished with exit code 0</div></div>
<div class="a" style="left:1891px;top:598px;width:7px;height:408px;background:rgba(90,93,96,0.55);border-radius:3px"></div>
<div class="a" style="left:95px;top:1030px;width:890px;height:7px;background:#4a4c4e;border-radius:3px"></div>
<div class="a" style="left:142px;top:1039px;width:56px;height:21px;background:#2e3031;"></div>
<div class="a ui" style="left:48px;top:1043px;color:#bbbbbb;font-size:12px;">Version Control</div>
<div class="a ui" style="left:167px;top:1043px;color:#bbbbbb;font-size:12px;">Run</div>
<div class="a ui" style="left:224px;top:1043px;color:#bbbbbb;font-size:12px;">TODO</div>
<div class="a ui" style="left:293px;top:1043px;color:#bbbbbb;font-size:12px;">Problems</div>
<div class="a ui" style="left:380px;top:1043px;color:#bbbbbb;font-size:12px;">Terminal</div>
<div class="a ui" style="left:466px;top:1043px;color:#bbbbbb;font-size:12px;">Python Packages</div>
<div class="a ui" style="left:598px;top:1043px;color:#bbbbbb;font-size:12px;">Python Console</div>
<div class="a ui" style="left:721px;top:1043px;color:#bbbbbb;font-size:12px;">Services</div>
<svg class="a" style="left:32px;top:1043px;" width="11" height="14" viewBox="0 0 11 14"><circle cx="2.5" cy="2.5" r="1.8" fill="#a9abad"/><circle cx="9" cy="2.5" r="1.8" fill="#a9abad"/><path d="M2.5 3 V13 M9 3 Q9 8 3 9" stroke="#a9abad" stroke-width="1.6" fill="none"/></svg>
<svg class="a" style="left:152px;top:1045px;" width="9" height="11" viewBox="0 0 9 11"><path d="M0.5 0.5 L8.5 5.5 L0.5 10.5Z" fill="#c9cbcd"/></svg>
<svg class="a" style="left:208px;top:1044px;" width="12" height="12" viewBox="0 0 12 12"><path d="M0 1.5 H2 M4 1.5 H12 M0 5.5 H2 M4 5.5 H12 M0 9.5 H2 M4 9.5 H12" stroke="#a9abad" stroke-width="1.6"/></svg>
<svg class="a" style="left:277px;top:1044px;" width="12" height="12" viewBox="0 0 12 12"><circle cx="6" cy="6" r="5.5" fill="#a9abad"/><path d="M6 2.5 V7 M6 8.5 V10" stroke="#3c3f41" stroke-width="1.6"/></svg>
<svg class="a" style="left:364px;top:1044px;" width="13" height="12" viewBox="0 0 13 12"><rect x="0" y="0" width="13" height="12" fill="#a9abad"/><path d="M2 3 L5 5.5 L2 8 M6 9 H10" stroke="#3c3f41" stroke-width="1.3" fill="none"/></svg>
<svg class="a" style="left:449px;top:1043px;" width="13" height="14" viewBox="0 0 13 14"><path d="M6.5 0.5 L12.5 3.5 L6.5 6.5 L0.5 3.5Z" fill="#a9abad"/><path d="M0.5 6.5 L6.5 9.5 L12.5 6.5 M0.5 9.5 L6.5 12.5 L12.5 9.5" stroke="#a9abad" stroke-width="1.4" fill="none"/></svg>
<svg class="a" style="left:581px;top:1043px;" width="13" height="13" viewBox="0 0 13 13"><path d="M6.5 0.5 Q3 0.5 3 3 V5 H7 V6 H2.5 Q0.5 6 0.5 8.5 Q0.5 11 2.5 11 H3.5 V9 Q3.5 7.5 5 7.5 H8.5 Q10 7.5 10 6 V3 Q10 0.5 6.5 0.5Z M6.5 12.5 Q10 12.5 10 10 V8 H6 V7 H10.5 Q12.5 7 12.5 4.5 Q12.5 2 10.5 2 H9.5 V4 Q9.5 5.5 8 5.5 H4.5 Q3 5.5 3 7 V10 Q3 12.5 6.5 12.5Z" fill="#a9abad"/></svg>
<svg class="a" style="left:704px;top:1043px;" width="13" height="13" viewBox="0 0 13 13"><path d="M6.5 0.3 L12 3.4 V9.6 L6.5 12.7 L1 9.6 V3.4Z" fill="#a9abad"/><path d="M5 4 L9 6.5 L5 9Z" fill="#3c3f41"/></svg>
<svg class="a" style="left:8px;top:1063px;" width="14" height="14" viewBox="0 0 14 14"><rect x="0.5" y="3.5" width="9" height="9" fill="none" stroke="#8a8c8e"/><path d="M3.5 1.5 H12.5 V10.5" fill="none" stroke="#8a8c8e"/></svg>
<svg class="a" style="left:1375px;top:1062px;" width="17" height="17" viewBox="0 0 17 17"><path d="M8.5 1 L11 6 L16 6.5 L12.5 10.5 L14 15.5 L8.5 13 L3 15.5 L4.5 10.5 L1 6.5 L6 6Z" fill="none" stroke="#8f6fe0" stroke-width="1.6"/><circle cx="8.5" cy="9" r="2.5" fill="#6e5ad6"/></svg>
<div class="a ui" style="left:1404px;top:1063px;color:#bbbbbb;font-size:13px;">10:28 (60 chars, 1 line break)</div>
<div class="a ui" style="left:1584px;top:1063px;color:#bbbbbb;font-size:13px;">CRLF</div>
<div class="a ui" style="left:1624px;top:1063px;color:#bbbbbb;font-size:13px;">UTF-8</div>
<div class="a ui" style="left:1670px;top:1063px;color:#bbbbbb;font-size:13px;">4 spaces</div>
<div class="a ui" style="left:1733px;top:1063px;color:#bbbbbb;font-size:13px;">Python 3.11 (ChromaPro2)</div>
<svg class="a" style="left:1894px;top:1064px;" width="13" height="13" viewBox="0 0 13 13"><path d="M2 6 V3.5 Q2 1 4.5 1 Q7 1 7 3.5" stroke="#a9abad" stroke-width="1.4" fill="none"/><rect x="4" y="6" width="9" height="7" fill="#a9abad"/></svg>
<svg class="a" style="left:1903px;top:64px;" width="15" height="16" viewBox="0 0 15 16"><path d="M7.5 1 Q3 1 3 6 V10 L1 12 H14 L12 10 V6 Q12 1 7.5 1Z M5.5 13 Q7.5 16 9.5 13" fill="#a9abad"/><circle cx="12" cy="3" r="2.5" fill="#d45a50"/></svg>
<div class="a ui" style="left:1904px;top:84px;color:#a9abad;font-size:13px;transform-origin:0 0;transform:translate(13px,0) rotate(90deg)">Notifications</div>
<svg class="a" style="left:1904px;top:175px;" width="12" height="12" viewBox="0 0 12 12"><ellipse cx="6" cy="2.5" rx="5" ry="2" fill="#a9abad"/><rect x="1" y="3" width="10" height="8" fill="#a9abad"/><path d="M1 6 H11 M1 9 H11" stroke="#3c3f41"/></svg>
<div class="a ui" style="left:1904px;top:191px;color:#a9abad;font-size:12px;transform-origin:0 0;transform:translate(12px,0) rotate(90deg)">Database</div>
<svg class="a" style="left:1904px;top:262px;" width="12" height="12" viewBox="0 0 12 12"><path d="M0 2 H12 M0 6 H12 M0 10 H12 M2 0 V12 M6 0 V12 M10 0 V12" stroke="#a9abad" stroke-width="1.4"/></svg>
<div class="a ui" style="left:1904px;top:278px;color:#a9abad;font-size:12px;transform-origin:0 0;transform:translate(12px,0) rotate(90deg)">SciView</div>
<svg class="a" style="left:1903px;top:336px;" width="14" height="14" viewBox="0 0 14 14"><path d="M7 1 L9 5 L13 5.5 L10 8.5 L11 13 L7 10.5 L3 13 L4 8.5 L1 5.5 L5 5Z" fill="none" stroke="#a9abad" stroke-width="1.5"/></svg>
<div class="a ui" style="left:1904px;top:352px;color:#a9abad;font-size:12px;transform-origin:0 0;transform:translate(12px,0) rotate(90deg)">Lingma</div>
<div class="a" style="left:1909px;top:973px;width:10px;height:59px;border:1px solid #3fb0c0;border-radius:3px;background:#2fae5a"></div>
<div class="a" style="left:786px;top:477px;width:331px;height:134px;background:#3c3f41;border:1px solid #55585a"></div>
<div class="a" style="left:787px;top:478px;width:329px;height:24px;background:#4a4d4f;"></div>
<div class="a ui" style="left:909px;top:482px;color:#bbbbbb;font-size:13px;">New Python file</div>
<div class="a" style="left:787px;top:502px;width:329px;height:1px;background:#3a3c3e;"></div>
<div class="a" style="left:787px;top:503px;width:329px;height:27px;background:#3a3d3e;"></div>
<svg class="a" style="left:794px;top:508px;" width="16" height="17" viewBox="0 0 16 17"><rect x="0.5" y="4" width="8" height="11.5" rx="1" fill="#a3b3bf"/><rect x="5" y="0.5" width="6" height="6" rx="1" fill="#b4c0ca"/><rect x="1.5" y="2" width="2.5" height="2" fill="#c6ced6"/><rect x="5.5" y="6" width="5.5" height="4.5" fill="#5f8fb6"/><circle cx="11" cy="12.5" r="3.9" fill="#c9bc5c"/><path d="M9 11.5 L11 13.5 L13.5 10.5" stroke="#8a8a3a" stroke-width="0.9" fill="none"/></svg>
<div class="a ui" style="left:813px;top:508px;color:#bbbbbb;font-size:13px;">test_co</div>
<div class="a" style="left:854px;top:507px;width:1px;height:17px;background:#c8c8c8;"></div>
<div class="a" style="left:787px;top:530px;width:329px;height:11px;background:#424546;"></div>
<div class="a" style="left:787px;top:541px;width:329px;height:23px;background:#4b6eaf;"></div>
<svg class="a" style="left:794px;top:545px;" width="16" height="17" viewBox="0 0 16 17"><rect x="0.5" y="4" width="8" height="11.5" rx="1" fill="#a3b3bf"/><rect x="5" y="0.5" width="6" height="6" rx="1" fill="#b4c0ca"/><rect x="1.5" y="2" width="2.5" height="2" fill="#c6ced6"/><rect x="5.5" y="6" width="5.5" height="4.5" fill="#5f8fb6"/><circle cx="11" cy="12.5" r="3.9" fill="#c9bc5c"/><path d="M9 11.5 L11 13.5 L13.5 10.5" stroke="#8a8a3a" stroke-width="0.9" fill="none"/></svg>
<div class="a ui" style="left:812px;top:545px;color:#dfe6ef;font-size:13px;">Python file</div>
<svg class="a" style="left:794px;top:568px;" width="16" height="17" viewBox="0 0 16 17"><rect x="0.5" y="4" width="8" height="11.5" rx="1" fill="#a3b3bf"/><rect x="5" y="0.5" width="6" height="6" rx="1" fill="#b4c0ca"/><rect x="1.5" y="2" width="2.5" height="2" fill="#c6ced6"/><rect x="5.5" y="6" width="5.5" height="4.5" fill="#5f8fb6"/><circle cx="11" cy="12.5" r="3.9" fill="#c9bc5c"/><path d="M9 11.5 L11 13.5 L13.5 10.5" stroke="#8a8a3a" stroke-width="0.9" fill="none"/></svg>
<div class="a ui" style="left:812px;top:568px;color:#bbbbbb;font-size:13px;">Python unit test</div>
<svg class="a" style="left:794px;top:591px;" width="16" height="17" viewBox="0 0 16 17"><rect x="0.5" y="4" width="8" height="11.5" rx="1" fill="#a3b3bf"/><rect x="5" y="0.5" width="6" height="6" rx="1" fill="#b4c0ca"/><rect x="1.5" y="2" width="2.5" height="2" fill="#c6ced6"/><rect x="5.5" y="6" width="5.5" height="4.5" fill="#5f8fb6"/><circle cx="11" cy="12.5" r="3.9" fill="#c9bc5c"/><path d="M9 11.5 L11 13.5 L13.5 10.5" stroke="#8a8a3a" stroke-width="0.9" fill="none"/></svg>
<div class="a ui" style="left:812px;top:591px;color:#bbbbbb;font-size:13px;">Python stub</div>
<div class="a" style="left:1813px;top:905px;width:52px;height:52px;border-radius:50%;border:3px solid #eaf7ff;background:linear-gradient(180deg,#3b8ef0 0%,#4497f2 52%,#86d6f6 60%,#a3e6fa 100%)"></div>
<div class="a ui" style="left:1821px;top:923px;color:#b9ecff;font-size:14px;">05:15</div>
<div class="a" style="left:1722px;top:1045px;font-family:'Liberation Mono',monospace;font-weight:bold;font-style:italic;font-size:19px;letter-spacing:-0.05px;color:#f0141a;white-space:nowrap;line-height:24px">www.java1234.com</div>
<svg class="a" style="left:413px;top:199px;" width="13" height="21" viewBox="0 0 13 21"><path d="M1 1 L1 16 L4.5 12.5 L7 18.5 L9.5 17.5 L7 11.5 L12 11.5Z" fill="#fff" stroke="#000" stroke-width="1"/></svg>
</body></html>
